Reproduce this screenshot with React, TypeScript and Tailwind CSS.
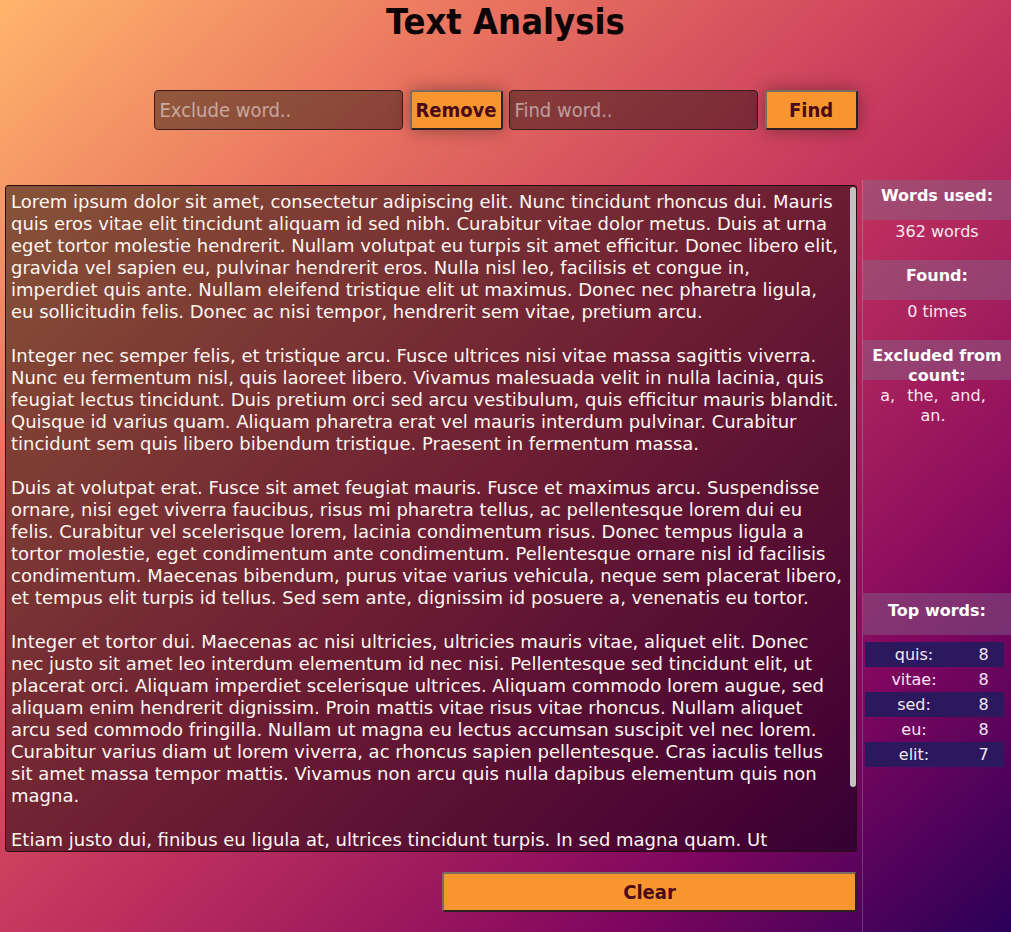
import { useState } from "react";

const SAMPLE = `Lorem ipsum dolor sit amet, consectetur adipiscing elit. Nunc tincidunt rhoncus dui. Mauris quis eros vitae elit tincidunt aliquam id sed nibh. Curabitur vitae dolor metus. Duis at urna eget tortor molestie hendrerit. Nullam volutpat eu turpis sit amet efficitur. Donec libero elit, gravida vel sapien eu, pulvinar hendrerit eros. Nulla nisl leo, facilisis et congue in, imperdiet quis ante. Nullam eleifend tristique elit ut maximus. Donec nec pharetra ligula, eu sollicitudin felis. Donec ac nisi tempor, hendrerit sem vitae, pretium arcu.

Integer nec semper felis, et tristique arcu. Fusce ultrices nisi vitae massa sagittis viverra. Nunc eu fermentum nisl, quis laoreet libero. Vivamus malesuada velit in nulla lacinia, quis feugiat lectus tincidunt. Duis pretium orci sed arcu vestibulum, quis efficitur mauris blandit. Quisque id varius quam. Aliquam pharetra erat vel mauris interdum pulvinar. Curabitur tincidunt sem quis libero bibendum tristique. Praesent in fermentum massa.

Duis at volutpat erat. Fusce sit amet feugiat mauris. Fusce et maximus arcu. Suspendisse ornare, nisi eget viverra faucibus, risus mi pharetra tellus, ac pellentesque lorem dui eu felis. Curabitur vel scelerisque lorem, lacinia condimentum risus. Donec tempus ligula a tortor molestie, eget condimentum ante condimentum. Pellentesque ornare nisl id facilisis condimentum. Maecenas bibendum, purus vitae varius vehicula, neque sem placerat libero, et tempus elit turpis id tellus. Sed sem ante, dignissim id posuere a, venenatis eu tortor.

Integer et tortor dui. Maecenas ac nisi ultricies, ultricies mauris vitae, aliquet elit. Donec nec justo sit amet leo interdum elementum id nec nisi. Pellentesque sed tincidunt elit, ut placerat orci. Aliquam imperdiet scelerisque ultrices. Aliquam commodo lorem augue, sed aliquam enim hendrerit dignissim. Proin mattis vitae risus vitae rhoncus. Nullam aliquet arcu sed commodo fringilla. Nullam ut magna eu lectus accumsan suscipit vel nec lorem. Curabitur varius diam ut lorem viverra, ac rhoncus sapien pellentesque. Cras iaculis tellus sit amet massa tempor mattis. Vivamus non arcu quis nulla dapibus elementum quis non magna.

Etiam justo dui, finibus eu ligula at, ultrices tincidunt turpis. In sed magna quam. Ut consequat sem sit amet ligula gravida posuere. Morbi id ante nec nisl fermentum pretium.`;

const topWords = [
  { word: "quis", count: 8 },
  { word: "vitae", count: 8 },
  { word: "sed", count: 8 },
  { word: "eu", count: 8 },
  { word: "elit", count: 7 },
];

const excluded = ["a", "the", "and", "an"];

export default function App() {
  const [text, setText] = useState<string>(SAMPLE);
  const [exclude, setExclude] = useState<string>("");
  const [find, setFind] = useState<string>("");

  return (
    <div className="min-h-screen w-full bg-[linear-gradient(to_bottom_right,#ffb56c_0%,#e8725f_25%,#c7385e_50%,#9e1a5d_68%,#80065f_80%,#2a0057_100%)] font-['DejaVu_Sans','Verdana',sans-serif] text-white">
      <header className="text-center">
        <h1 className="pt-[2px] font-['DejaVu_Sans_Condensed','DejaVu_Sans',sans-serif] text-[36px] font-bold leading-10 text-[#0d0508] [font-stretch:condensed]">
          Text Analysis
        </h1>
        <div className="mt-12 flex justify-center">
          <input
            value={exclude}
            onChange={(e) => setExclude(e.target.value)}
            placeholder="Exclude word.."
            className="h-10 w-[249px] rounded-[4px] border border-[#3a1c1c] bg-black/40 px-[5px] font-['DejaVu_Sans_Condensed','DejaVu_Sans',sans-serif] text-[20px] text-white outline-none placeholder:text-white/50 [font-stretch:condensed]"
          />
          <button className="ml-[7px] h-10 w-[93px] rounded-[3px] border-2 border-t-[#7b6c62] border-l-[#7b6c62] border-r-[#2e2020] border-b-[#2e2020] bg-[#f7962e] font-['DejaVu_Sans_Condensed','DejaVu_Sans',sans-serif] text-[20px] font-bold text-[#4a0a18] shadow-[0_0_18px_rgba(0,0,0,0.35)] [font-stretch:condensed]">
            Remove
          </button>
          <input
            value={find}
            onChange={(e) => setFind(e.target.value)}
            placeholder="Find word.."
            className="ml-[6px] h-10 w-[249px] rounded-[4px] border border-[#3a1c1c] bg-black/40 px-[5px] font-['DejaVu_Sans_Condensed','DejaVu_Sans',sans-serif] text-[20px] text-white outline-none placeholder:text-white/50 [font-stretch:condensed]"
          />
          <button className="ml-[7px] h-10 w-[93px] rounded-[3px] border-2 border-t-[#7b6c62] border-l-[#7b6c62] border-r-[#2e2020] border-b-[#2e2020] bg-[#f7962e] font-['DejaVu_Sans_Condensed','DejaVu_Sans',sans-serif] text-[20px] font-bold text-[#4a0a18] shadow-[0_0_18px_rgba(0,0,0,0.35)] [font-stretch:condensed]">
            Find
          </button>
        </div>
      </header>

      <div className="mt-[50px] flex">
        <main className="w-[862px] px-[5px] pt-[5px]">
          <div className="relative">
            <textarea
              value={text}
              onChange={(e) => setText(e.target.value)}
              className="block h-[667px] w-full resize-none overflow-y-auto rounded-[3px] border border-[#2a0c14] bg-black/45 pl-[5px] pr-[14px] pt-[5px] text-[18px] leading-[22px] text-[#fdf6f0] outline-none [scrollbar-width:none]"
            />
            {/* scrollbar thumb */}
            <div className="pointer-events-none absolute right-px top-[2px] h-[600px] w-[6px] rounded-[3px] bg-[#c2c2c2]" />
          </div>
          <button
            onClick={() => setText("")}
            className="ml-auto mt-5 block h-10 w-[415px] rounded-[3px] border-2 border-t-[#7b6c62] border-l-[#7b6c62] border-r-[#2e2020] border-b-[#2e2020] bg-[#f7962e] font-['DejaVu_Sans_Condensed','DejaVu_Sans',sans-serif] text-[20px] font-bold text-[#4a0a18] [font-stretch:condensed]"
          >
            Clear
          </button>
        </main>

        <aside className="flex min-h-[752px] flex-1 flex-col border-l border-white/20 text-center text-[16px]">
          <div className="h-10 bg-[rgba(128,110,140,0.42)] pt-[6px] font-bold leading-5">Words used:</div>
          <div className="h-10 pt-0.5 leading-5 text-[#f6e8f0]">362 words</div>
          <div className="h-10 bg-[rgba(128,110,140,0.42)] pt-[6px] font-bold leading-5">Found:</div>
          <div className="h-10 pt-0.5 leading-5 text-[#f6e8f0]">0 times</div>
          <div className="h-10 bg-[rgba(128,110,140,0.42)] px-1 pt-[6px] font-bold leading-5">Excluded from count:</div>
          <div className="pl-0 pr-2 pt-[6px] leading-5 text-[#f6e8f0]">
            {excluded.map((w, i) => (
              <span key={w} className="mx-[6px] inline-block">
                {w}
                {i === excluded.length - 1 ? "." : ","}
              </span>
            ))}
          </div>
          <div className="mt-[167px] h-[42px] bg-[rgba(128,110,140,0.42)] pt-2 font-bold leading-5">Top words:</div>
          <div className="mt-[7px] pl-[2px] pr-[7px]">
            {topWords.map((t, i) => (
              <div
                key={t.word}
                className={`grid h-[25px] grid-cols-[98px_1fr] items-center leading-5 text-[#f3e6f3] ${i % 2 === 0 ? "bg-[#2c185c]" : ""}`}
              >
                <span>{t.word}:</span>
                <span>{t.count}</span>
              </div>
            ))}
          </div>
        </aside>
      </div>
    </div>
  );
}
